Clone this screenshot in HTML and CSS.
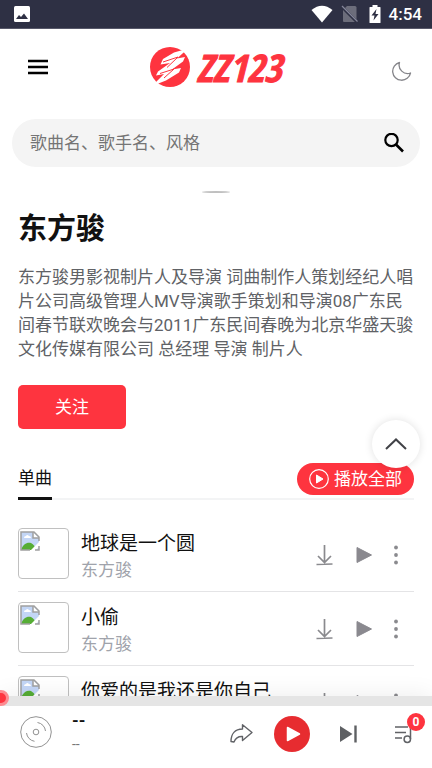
FILE: index.html
```html
<!DOCTYPE html>
<html lang="zh-CN">
<head>
<meta charset="utf-8">
<meta name="viewport" content="width=device-width, initial-scale=1">
<title>东方骏 - ZZ123</title>
<link rel="stylesheet" href="styles.css">
</head>
<body>
<svg class="sprite" aria-hidden="true">
  <symbol id="broken" viewBox="0 0 20 20">
    <path d="M1 1H14L19 6V19H1Z" fill="#c3d6f6"/>
    <path d="M4 7q0-2 2-2 1-2 3 0 2 0 2 2z" fill="#fff"/>
    <path d="M1 19C3 13 7 11 11 12Q15 14 16 19Z" fill="#56ad35"/>
    <path d="M20 10L10 20H15L20 15Z" fill="#fff"/>
    <path d="M13 1V7H19" fill="#fff" stroke="#a0a0a0" stroke-width="1.500"/>
    <path d="M10 19H1V1H14L19 6V10M19 15V19H15" fill="none" stroke="#a0a0a0" stroke-width="1.500"/>
  </symbol>
  <symbol id="download" viewBox="0 0 20 22">
    <path d="M10.500 1V18M4 12L10.500 18.500L17 12M2.500 20.500L18.500 20" fill="none" stroke="#8a8a8e" stroke-width="1.700"/>
  </symbol>
  <symbol id="play" viewBox="0 0 20 22">
    <path d="M3 3.500V18.500L17.500 11Z" fill="#8a898f" stroke="#8a898f" stroke-linejoin="round"/>
  </symbol>
  <symbol id="more" viewBox="0 0 20 22">
    <g fill="#8a8a8e"><circle cx="10" cy="3.500" r="1.900"/><circle cx="10" cy="11" r="1.900"/><circle cx="10" cy="18.500" r="1.900"/></g>
  </symbol>
</svg>

<div class="status">
  <svg width="16" height="16" viewBox="0 0 16 16"><rect width="16" height="16" rx="1.500" fill="#fff"/><path d="M2 13L5 9L7 11L10 7.500L14 13Z" fill="#2e3044"/></svg>
  <div class="status-right">
    <svg width="22" height="18" viewBox="0 0 22 18"><path d="M0.500 5Q11-3.500 21.500 5L11 17.500Z" fill="#fff"/></svg>
    <svg width="18" height="18" viewBox="0 0 18 18"><path d="M6 1H14Q15.500 1 15.500 2.500V17H3Q2 17 2 16V5Z" fill="#6c6d7b"/><path d="M1 2L16.500 17.500" stroke="#2e3044" stroke-width="3"/><path d="M1 1L16.500 16.500" stroke="#85869a" stroke-width="1.200"/></svg>
    <svg class="battery" width="12" height="18" viewBox="0 0 12 18"><path d="M3.500 0H8.500V2H11Q11.500 2 11.500 2.500V17.500Q11.500 18 11 18H1Q.5 18 .5 17.500V2.500Q.5 2 1 2H3.500Z" fill="#fff"/><path d="M7.500 4L2.500 10.500H5.500L4.500 15.500L9.500 9H6.500Z" fill="#2e3044"/></svg>
    <span>4:54</span>
  </div>
</div>

<main class="page">
  <header class="header">
    <button class="icon-button menu" aria-label="菜单"><svg width="20" height="16" viewBox="0 0 20 16"><path d="M0 2H20M0 8H20M0 14H20" stroke="#000" stroke-width="2.400"/></svg></button>
    <a class="logo" href="#">
      <svg width="40" height="40" viewBox="0 0 40 40"><circle cx="20" cy="20" r="20" fill="#fe343f"/><path d="M38 1.500L24 5.500L13 12L10.500 17.500L20 16L8 24.500L6 28.500L14 27L2 39L16 33.500L29 25.500L31 21L22 22.500L33 14.500L35 10L27 11.500Z" fill="#fff"/><path d="M13 15L28 10L17 20.500M10 26.500L24 22L14 31" fill="none" stroke="#fe343f" stroke-width="1"/></svg>
      <span>ZZ123</span>
    </a>
    <button class="icon-button theme" aria-label="夜间模式"><svg width="20" height="20" viewBox="0 0 20 20"><path d="M7.500 1.500A9 9 0 1 0 18.500 12A8.500 8.500 0 0 1 7.500 1.500Z" fill="none" stroke="#85858a" stroke-width="1.300" stroke-linejoin="round"/></svg></button>
  </header>

  <form class="search">
    <input type="text" aria-label="搜索" placeholder="歌曲名、歌手名、风格">
    <button class="icon-button" type="button" aria-label="搜索"><svg width="20" height="20" viewBox="0 0 20 20"><circle cx="7.500" cy="7" r="6.200" fill="none" stroke="#000" stroke-width="2.200"/><path d="M12 11.500L19 18.500" stroke="#000" stroke-width="2.600"/></svg></button>
  </form>

  <section class="artist">
    <div class="avatar"></div>
    <h1>东方骏</h1>
    <p>东方骏男影视制片人及导演 词曲制作人策划经纪人唱片公司高级管理人MV导演歌手策划和导演08广东民间春节联欢晚会与2011广东民间春晚为北京华盛天骏文化传媒有限公司 总经理 导演 制片人</p>
    <button class="follow">关注</button>
  </section>

  <section class="songs">
    <div class="tabs">
      <h2>单曲</h2>
      <button class="play-all"><svg width="20" height="20" viewBox="0 0 20 20"><circle cx="10" cy="10" r="9.300" fill="none" stroke="#fff" stroke-width="1.200"/><path d="M7.500 6V14L14 10Z" fill="#fff" stroke="#fff" stroke-linejoin="round"/></svg>播放全部</button>
    </div>
    <ul class="list">
      <li>
        <div class="cover"><svg width="20" height="20"><use href="#broken"/></svg></div>
        <div class="info"><a href="#">地球是一个圆</a><span>东方骏</span></div>
        <div class="actions">
          <button class="icon-button" aria-label="下载"><svg width="20" height="22"><use href="#download"/></svg></button>
          <button class="icon-button" aria-label="播放"><svg width="20" height="22"><use href="#play"/></svg></button>
          <button class="icon-button more" aria-label="更多"><svg width="20" height="22"><use href="#more"/></svg></button>
        </div>
      </li>
      <li>
        <div class="cover"><svg width="20" height="20"><use href="#broken"/></svg></div>
        <div class="info"><a href="#">小偷</a><span>东方骏</span></div>
        <div class="actions">
          <button class="icon-button" aria-label="下载"><svg width="20" height="22"><use href="#download"/></svg></button>
          <button class="icon-button" aria-label="播放"><svg width="20" height="22"><use href="#play"/></svg></button>
          <button class="icon-button more" aria-label="更多"><svg width="20" height="22"><use href="#more"/></svg></button>
        </div>
      </li>
      <li>
        <div class="cover"><svg width="20" height="20"><use href="#broken"/></svg></div>
        <div class="info"><a href="#">你爱的是我还是你自己</a><span>东方骏</span></div>
        <div class="actions">
          <button class="icon-button" aria-label="下载"><svg width="20" height="22"><use href="#download"/></svg></button>
          <button class="icon-button" aria-label="播放"><svg width="20" height="22"><use href="#play"/></svg></button>
          <button class="icon-button more" aria-label="更多"><svg width="20" height="22"><use href="#more"/></svg></button>
        </div>
      </li>
    </ul>
  </section>
</main>

<footer class="player">
  <div class="progress"><i class="knob"></i></div>
  <div class="controls">
    <svg width="32" height="32" viewBox="0 0 32 32" fill="none" stroke="#929292"><circle cx="16" cy="16" r="15.300"/><circle cx="16" cy="16" r="2.800"/><path d="M17.500 6.500A9.500 9.500 0 0 1 25.500 15M6.500 17A9.500 9.500 0 0 0 14.500 25.300"/></svg>
    <div class="track"><strong>--</strong><span>--</span></div>
    <div class="buttons">
      <button class="icon-button share" aria-label="分享"><svg width="24" height="20" viewBox="0 0 24 20"><path d="M12.500 0.700L22 8.500L12.500 16.500V12.500Q6.500 12 4 18L1 17.500C1 10 5 5 12.500 5Z" fill="none" stroke="#606266" stroke-width="1.400" stroke-linejoin="round"/></svg></button>
      <button class="icon-button" aria-label="播放"><svg width="36" height="36" viewBox="0 0 36 36"><circle cx="18" cy="18" r="18" fill="#e72c30"/><path d="M13.500 11.500V24.500L25.500 18Z" fill="#fff" stroke="#fff" stroke-width="1.500" stroke-linejoin="round"/></svg></button>
      <button class="icon-button next" aria-label="下一首"><svg width="20" height="20" viewBox="0 0 20 20"><path d="M2 2L14.500 10L2 18Z" fill="#5e6063"/><path d="M17.500 1.500V18.500" stroke="#5e6063" stroke-width="2.400"/></svg></button>
      <button class="icon-button queue" aria-label="播放列表"><svg width="20" height="20" viewBox="0 0 20 20" fill="none" stroke="#606266" stroke-width="1.500"><path d="M1 3H14M1 8.500H12M1 14H8M16.500 2V15"/><circle cx="13.300" cy="15.300" r="3.200"/></svg><span class="badge">0</span></button>
    </div>
  </div>
</footer>

<button class="to-top" aria-label="返回顶部"><svg width="24" height="14" viewBox="0 0 24 14"><path d="M2 12L12 2.500L22 12" fill="none" stroke="#414247" stroke-width="2"/></svg></button>
</body>
</html>
```
FILE: styles.css
```css
* { box-sizing: border-box; }

body {
  margin: 0;
  height: 100vh;
  display: flex;
  flex-direction: column;
  overflow: hidden;
  background: #fff;
  color: #111;
  font-family: Roboto, "Noto Sans CJK SC", sans-serif;
  font-size: 17px;
  line-height: 24px;
}

button, input { font: inherit; border: 0; }
a { color: inherit; text-decoration: none; }
svg { display: block; flex: none; }
.sprite { position: absolute; width: 0; height: 0; }
.icon-button { padding: 0; background: none; }

.status {
  flex: none;
  display: flex;
  align-items: center;
  justify-content: space-between;
  height: 29px;
  padding: 0 10px 0 14px;
  background: #2e3044;
  border-bottom: 1px solid #57586a;
  color: #fff;
  font-weight: 500;
}
.status-right { display: flex; align-items: center; gap: 8px; }
.status-right .battery { margin-left: 2px; }

.page { flex: 1; min-height: 0; overflow: hidden; }

.header {
  display: grid;
  grid-template-columns: 1fr auto 1fr;
  align-items: center;
  height: 76px;
  padding: 0 20px;
}
.header .menu { justify-self: start; padding-left: 8px; }
.header .theme { justify-self: end; padding-top: 8px; }
.logo {
  display: flex;
  align-items: center;
  gap: 6px;
  color: #fe343f;
  font: italic bold 38px/40px "Liberation Sans Narrow", "Open Sans Condensed", sans-serif;
  -webkit-text-stroke: 1px #fe343f;
}

.search {
  display: flex;
  align-items: center;
  height: 48px;
  margin: 14px 12px 0;
  padding: 0 16px 0 18px;
  border-radius: 24px;
  background: #f4f4f4;
}
.search input {
  flex: 1;
  min-width: 0;
  padding: 0;
  background: none;
  outline: 0;
}
.search input::placeholder { color: #757575; opacity: 1; }

.artist { padding: 24px 18px 0; }
.avatar {
  width: 28px;
  height: 2px;
  margin: 0 auto;
  border-radius: 50%;
  background: #c0c0c0;
}
h1 { margin: 16px 0; font-size: 29px; line-height: 40px; }
.artist p { margin: 0; color: #606266; }
.follow {
  display: block;
  width: 108px;
  height: 44px;
  margin-top: 24px;
  padding: 0;
  border-radius: 5px;
  background: #fe343f;
  color: #fff;
}

.songs { padding: 28px 18px 0; }
.tabs {
  display: flex;
  align-items: center;
  justify-content: space-between;
  height: 43px;
  border-bottom: 2px solid #f3f4f5;
}
h2 {
  margin: 0 0 -2px;
  height: 43px;
  border-bottom: 3px solid #111;
  font-size: 17px;
  font-weight: 400;
  line-height: 42px;
}
.play-all {
  display: flex;
  align-items: center;
  gap: 5px;
  height: 32px;
  margin-top: 2px;
  padding: 0 12px;
  border-radius: 16px;
  background: #fe343f;
  color: #fff;
}

.list { margin: 18px 0 0; padding: 0; list-style: none; }
.list li {
  display: flex;
  align-items: center;
  gap: 12px;
  height: 74px;
  padding: 10px 0 12px;
  border-bottom: 1px solid #e4e4e6;
}
.cover {
  flex: none;
  width: 51px;
  height: 51px;
  padding: 2px 1px;
  border: 1px solid #c0c0c0;
  border-radius: 4px;
}
.info { flex: 1; min-width: 0; display: flex; flex-direction: column; padding-top: 4px; }
.info a { font-size: 19px; line-height: 28px; }
.info span { color: #a0a3ab; }
.actions { display: flex; gap: 20px; padding: 2px 8px 0 0; }
.actions .more { margin-left: -8px; }

.player {
  position: relative;
  flex: none;
  height: 72px;
  background: #fff;
  box-shadow: 0 0 24px rgba(0, 0, 0, 0.08);
}
.progress { position: relative; height: 10px; background: #e5e5e5; }
.knob {
  position: absolute;
  left: -7px;
  top: -6px;
  width: 16px;
  height: 16px;
  border: 3px solid #fd8b91;
  border-radius: 50%;
  background: #fe343f;
}
.controls { display: flex; align-items: center; gap: 20px; padding: 2px 18px 0 20px; }
.track { flex: 1; display: flex; flex-direction: column; }
.track span { color: #777; font-size: 14px; }
.buttons { display: flex; align-items: center; gap: 24px; padding-top: 4px; }
.share { margin-right: -4px; }
.next { margin: 0 12px 0 4px; }
.queue { position: relative; }
.badge {
  position: absolute;
  top: -11px;
  right: -11px;
  width: 18px;
  height: 18px;
  border-radius: 50%;
  background: #fe343f;
  color: #fff;
  font-size: 12px;
  font-weight: 700;
  line-height: 18px;
}

.to-top {
  position: absolute;
  right: 12px;
  bottom: 300px;
  display: flex;
  align-items: center;
  justify-content: center;
  width: 48px;
  height: 48px;
  padding: 0;
  border-radius: 50%;
  background: #fff;
  box-shadow: 0 0 8px rgba(0, 0, 0, 0.12);
}
```
